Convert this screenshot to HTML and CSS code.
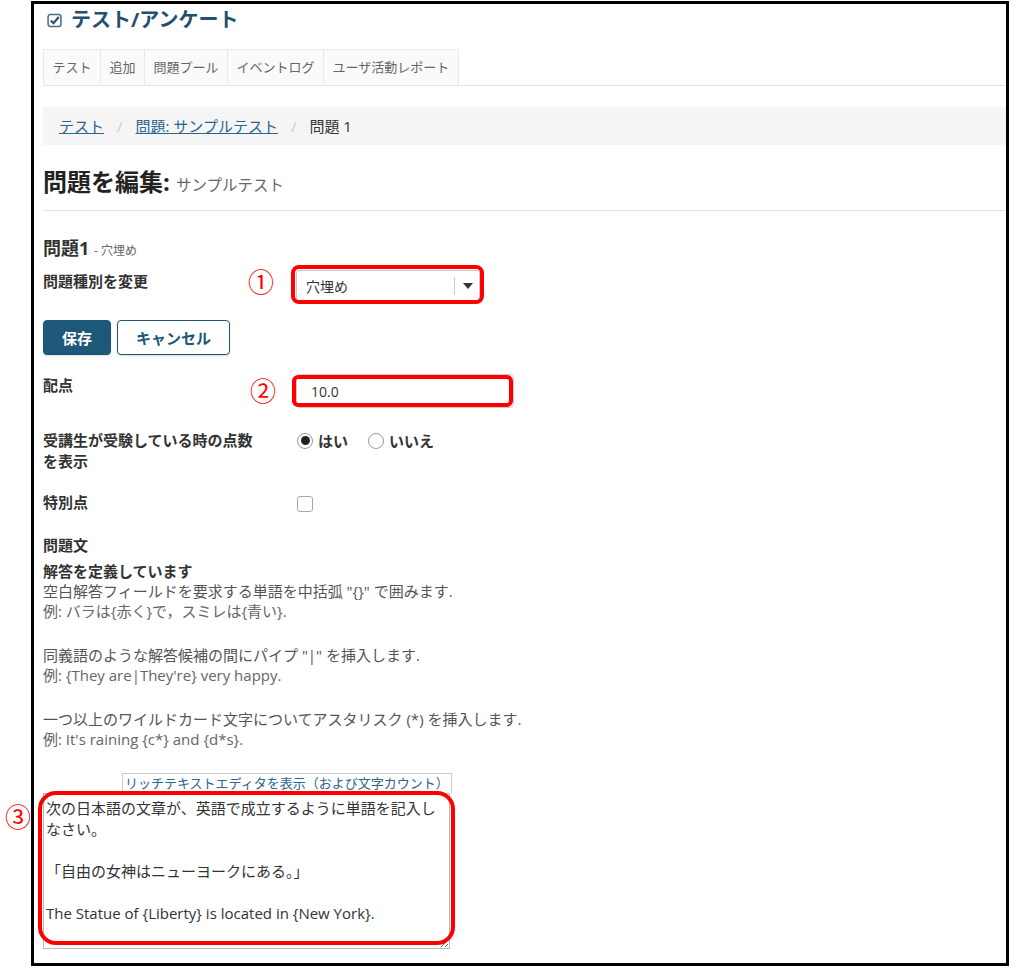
FILE: index.html
```html
<!DOCTYPE html>
<html lang="ja">

<head>
    <meta charset="UTF-8">
    <meta name="viewport" content="width=device-width, initial-scale=1.0">
    <title>問題を編集: サンプルテスト</title>
    <link rel="stylesheet" href="styles.css">
</head>

<body>
    <div class="frame">
        <div class="page">
            <h2 class="tool_title">
                <svg width="15" height="15" viewBox="0 0 14 14">
                    <rect x="1" y="1.5" width="12" height="11" rx="2" fill="none" stroke="#4a6b80" stroke-width="1.4"/>
                    <path d="M3.6 7 L6.1 9.5 L11 3.8" fill="none" stroke="#23506e" stroke-width="2"/>
                </svg>
                テスト/アンケート
            </h2>
            <ul class="nav_tabs">
                <li><a href="javascript:;">テスト</a></li>
                <li><a href="javascript:;">追加</a></li>
                <li><a href="javascript:;">問題プール</a></li>
                <li><a href="javascript:;">イベントログ</a></li>
                <li><a href="javascript:;">ユーザ活動レポート</a></li>
            </ul>
            <div class="crumb">
                <a href="javascript:;">テスト</a><span class="sep">/</span><a href="javascript:;">問題: サンプルテスト</a><span class="sep">/</span><span>問題 1</span>
            </div>
            <h1 class="page_head">問題を編集: <small>サンプルテスト</small></h1>
            <hr class="rule">

            <h3 class="q_title">問題1 <small>- 穴埋め</small></h3>
            <div class="row row_type">
                <label class="lbl">問題種別を変更</label>
                <div class="field">
                    <span class="mark mark1">①</span>
                    <div class="select">
                        <span>穴埋め</span>
                        <i class="caret"></i>
                    </div>
                    <span class="hl hl1"></span>
                </div>
            </div>
            <div class="btns">
                <button class="btn btn_primary">保存</button>
                <button class="btn btn_default">キャンセル</button>
            </div>
            <div class="row row_points">
                <label class="lbl">配点</label>
                <div class="field">
                    <span class="mark mark2">②</span>
                    <input class="num" type="text" value="10.0">
                    <span class="hl hl2"></span>
                </div>
            </div>
            <div class="row row_show">
                <label class="lbl">受講生が受験している時の点数を表示</label>
                <div class="radios">
                    <span class="radio on"></span><span class="opt">はい</span>
                    <span class="radio"></span><span class="opt">いいえ</span>
                </div>
            </div>
            <div class="row row_extra">
                <label class="lbl">特別点</label>
                <span class="check"></span>
            </div>

            <div class="q_text">問題文</div>
            <div class="help">
                <strong>解答を定義しています</strong>
                <p>空白解答フィールドを要求する単語を中括弧 "{}" で囲みます.<br><span class="eg">例: バラは{赤く}で，スミレは{青い}.</span></p>
                <p>同義語のような解答候補の間にパイプ "|" を挿入します.<br><span class="eg">例: {They are|They're} very happy.</span></p>
                <p>一つ以上のワイルドカード文字についてアスタリスク (*) を挿入します.<br><span class="eg">例: It's raining {c*} and {d*s}.</span></p>
            </div>

            <a class="rte_toggle" href="javascript:;">リッチテキストエディタを表示（および文字カウント）</a>
            <div class="ta_wrap">
                <span class="mark mark3">③</span>
                <textarea class="q_body">次の日本語の文章が、英語で成立するように単語を記入しなさい。

「自由の女神はニューヨークにある。」

The Statue of {Liberty} is located in {New York}.</textarea>
                <span class="hl hl3"></span>
            </div>
        </div>
    </div>
</body>

</html>
```

FILE: styles.css
```css
* {
    margin: 0;
    padding: 0;
    box-sizing: border-box;
}

body {
    font-family: "Open Sans", "Noto Sans CJK JP", sans-serif;
    font-size: 15px;
    color: #333;
    background: #fff;
}

a {
    color: #2b6690;
}

.frame {
    width: 978px;
    height: 965px;
    margin: 1px 0 0 31px;
    border: 3px solid #000;
}

.page {
    padding-left: 9px;
}

/* ツールのタイトルとタブ */
.tool_title {
    display: flex;
    align-items: center;
    padding-top: 4px;
    margin-bottom: 17px;
    font-size: 20px;
    line-height: 24px;
    color: #23506e;
}

.tool_title svg {
    margin: 0 9px 0 4px;
}

.nav_tabs {
    list-style: none;
    display: flex;
    border-bottom: 1px solid #e3e3e3;
}

.nav_tabs a {
    display: block;
    padding: 0 8.5px;
    line-height: 35px;
    border: 1px solid #e8e8e8;
    border-bottom: 0;
    border-left: 0;
    background: #fafafa;
    color: #666;
    font-size: 13px;
    text-decoration: none;
}

.nav_tabs li:first-child a {
    border-left: 1px solid #e8e8e8;
}

.crumb {
    margin-top: 21px;
    height: 38px;
    line-height: 38px;
    padding-left: 16px;
    background: #f5f5f5;
    font-size: 15px;
}

.crumb .sep {
    color: #ccc;
    padding: 0 13px;
}

.page_head {
    margin-top: 22px;
    font-size: 24px;
    line-height: 30px;
    color: #222;
}

.page_head small {
    font-size: 15.5px;
    line-height: 1;
    font-weight: normal;
    color: #666;
}

.rule {
    border: 0;
    border-top: 1px solid #e3e3e3;
    margin-top: 13px;
}

/* フォーム */
.q_title {
    margin-top: 25px;
    font-size: 18px;
    line-height: 24px;
}

.q_title small {
    font-size: 12px;
    line-height: 1;
    font-weight: normal;
    color: #666;
}

.row {
    display: flex;
}

.lbl {
    width: 222px;
    margin-right: 31px;
    flex: none;
    font-weight: bold;
    font-size: 15px;
    line-height: 21px;
}

.field {
    position: relative;
}

.row_type {
    margin-top: 10px;
}

.row_type .lbl {
    padding-top: 1px;
}

.select {
    width: 184px;
    height: 31px;
    display: flex;
    align-items: center;
    padding-left: 9px;
    border: 1px solid #c8c8c8;
    border-radius: 3px;
    font-size: 14px;
    position: relative;
}

.select .caret {
    position: absolute;
    right: 0;
    top: 6px;
    width: 25px;
    height: 18px;
    border-left: 1px solid #ccc;
}

.select .caret::after {
    content: "";
    position: absolute;
    left: 8px;
    top: 6px;
    border-left: 5px solid transparent;
    border-right: 5px solid transparent;
    border-top: 6px solid #333;
}

.btns {
    margin-top: 19px;
    display: flex;
    gap: 6px;
}

.btn {
    height: 35px;
    padding: 0 18px;
    border: 1px solid #1d5676;
    border-radius: 4px;
    font-family: inherit;
    font-weight: bold;
    font-size: 15px;
    box-shadow: 0 1px 2px rgba(0, 0, 0, 0.15);
}

.btn_primary {
    background: #1d5878;
    color: #fff;
}

.btn_default {
    background: #fff;
    color: #1d5676;
}

.row_points {
    margin-top: 19px;
}

.row_points .lbl {
    padding-top: 1px;
}

.num {
    display: block;
    width: 218px;
    height: 34px;
    border: 1px solid #ccc;
    border-radius: 4px;
    padding-left: 14px;
    font-family: inherit;
    font-size: 14px;
    color: #333;
}

.row_show {
    margin-top: 22px;
}

.radios {
    display: flex;
    align-items: center;
    height: 21px;
    font-weight: bold;
    font-size: 15px;
}

.radio {
    width: 16px;
    height: 16px;
    margin: 0 5px 0 1px;
    border: 1px solid #999;
    border-radius: 50%;
    display: inline-flex;
    align-items: center;
    justify-content: center;
}

.radio.on::after {
    content: "";
    width: 9px;
    height: 9px;
    border-radius: 50%;
    background: #222;
}

.opt {
    margin-right: 19px;
}

.row_extra {
    margin-top: 20px;
}

.check {
    width: 16px;
    height: 16px;
    margin: 4px 0 0 1px;
    border: 1px solid #aaa;
    border-radius: 3px;
}

.q_text {
    margin-top: 22px;
    font-weight: bold;
    line-height: 20px;
}

.help {
    margin-top: 6px;
    line-height: 20px;
    color: #555;
}

.help strong {
    display: block;
    color: #333;
}

.help p {
    margin-bottom: 24px;
}

.help .eg {
    color: #666;
}

.rte_toggle {
    display: block;
    margin: 20px 0 0 79px;
    width: 330px;
    height: 20px;
    padding: 1px 0 0 2px;
    border: 1px solid #ccc;
    border-bottom: 0;
    font-size: 13px;
    line-height: 16px;
    text-decoration: none;
}

.ta_wrap {
    position: relative;
    width: 407px;
}

.q_body {
    display: block;
    width: 407px;
    height: 156px;
    padding: 4px 2px;
    border: 1px solid #bbb;
    font-family: "Open Sans", "Noto Sans CJK JP", sans-serif;
    font-size: 15px;
    line-height: 21px;
    color: #333;
    resize: vertical;
}

/* 赤い注釈 */
.hl {
    position: absolute;
    border: 4px solid #f00;
    pointer-events: none;
}

.hl1 {
    top: -5px;
    right: -4px;
    bottom: -3px;
    left: -5px;
    border-radius: 8px;
}

.hl2 {
    top: 1px;
    right: 1px;
    bottom: 1px;
    left: -4px;
    border-radius: 6px;
}

.hl3 {
    top: -2px;
    right: -5px;
    bottom: 4px;
    left: -5px;
    border-radius: 18px;
}

.mark {
    position: absolute;
    font-family: "Noto Sans CJK JP", sans-serif;
    font-size: 26px;
    line-height: 26px;
    color: #f00;
}

.mark1 {
    left: -48px;
    top: -2px;
}

.mark2 {
    left: -46px;
    top: 3px;
}

.mark3 {
    left: -38px;
    top: 10px;
}
```
